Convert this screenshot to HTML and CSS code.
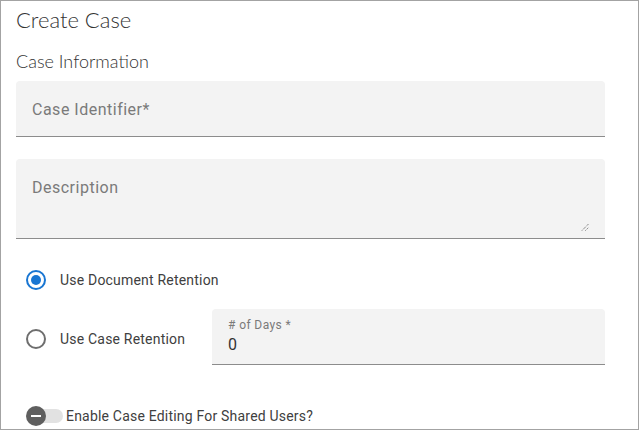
FILE: index.html
```html
<!DOCTYPE html>
<html>
<head>
<meta charset="utf-8">
<link rel="stylesheet" href="styles.css">
</head>
<body>
<div class="frame">
  <h1 class="title">Create Case</h1>
  <h2 class="section">Case Information</h2>
  <div class="field field-id">
    <span class="placeholder">Case Identifier*</span>
  </div>
  <div class="field field-desc">
    <span class="placeholder">Description</span>
    <svg class="grip" width="8" height="8" viewBox="0 0 8 8"><path d="M1 7.5 L7.5 1 M4.5 7.5 L7.5 4.5" stroke="#555" stroke-width="1" stroke-dasharray="1 1"/></svg>
  </div>
  <div class="radios">
    <div class="radio-row">
      <span class="radio checked"><span class="dot"></span></span>
      <span class="radio-label">Use Document Retention</span>
    </div>
    <div class="radio-row second">
      <div class="radio-left">
        <span class="radio"></span>
        <span class="radio-label">Use Case Retention</span>
      </div>
      <div class="field field-days">
        <span class="small-label"># of Days *</span>
        <span class="value">0</span>
      </div>
    </div>
  </div>
  <div class="toggle-row">
    <span class="toggle"><span class="track"></span><span class="thumb"><span class="minus"></span></span></span>
    <span class="toggle-label">Enable Case Editing For Shared Users?</span>
  </div>
</div>
</body>
</html>
```
FILE: styles.css
```css
html, body {
  margin: 0;
  padding: 0;
  background: #fff;
}
.frame {
  box-sizing: border-box;
  width: 639px;
  height: 430px;
  border: 1px solid #a3a3a3;
  padding: 0 33px 0 15px;
  overflow: hidden;
  font-family: Roboto, "Liberation Sans", sans-serif;
}
.title {
  margin: 6px 0 0 0;
  font-family: Lato, "Open Sans", sans-serif;
  font-weight: 300;
  font-size: 22px;
  line-height: 26px;
  color: #333;
}
.section {
  margin: 16px 0 0 0;
  font-family: Lato, "Open Sans", sans-serif;
  font-weight: 300;
  font-size: 18px;
  line-height: 24px;
  color: #333;
}
.field {
  position: relative;
  box-sizing: border-box;
  background: #f3f3f3;
  border-radius: 4px 4px 0 0;
  border-bottom: 1px solid #8c8c8c;
}
.field-id {
  margin-top: 8px;
  height: 56px;
  padding: 19px 16px 0;
}
.field-desc {
  margin-top: 22px;
  height: 80px;
  padding: 19px 16px 0;
}
.placeholder {
  font-size: 16px;
  letter-spacing: 0.5px;
  color: #7a7a7a;
  line-height: 20px;
}
.grip {
  position: absolute;
  right: 16px;
  bottom: 7px;
}
.radios {
  margin-top: 31px;
  display: flex;
  flex-direction: column;
}
.radio-row {
  display: flex;
  align-items: center;
  height: 20px;
  padding-left: 10px;
}
.radio-row.second {
  margin-top: 19px;
  height: 56px;
  justify-content: space-between;
}
.radio-left {
  display: flex;
  align-items: center;
  padding-top: 4px;
}
.radio {
  box-sizing: border-box;
  width: 20px;
  height: 20px;
  border-radius: 50%;
  border: 2px solid #6e6e6e;
  display: flex;
  align-items: center;
  justify-content: center;
}
.radio.checked {
  border-color: #1976d2;
}
.dot {
  width: 10px;
  height: 10px;
  border-radius: 50%;
  background: #1976d2;
}
.radio-label {
  margin-left: 14px;
  font-size: 14px;
  letter-spacing: 0.2px;
  color: #404040;
}
.field-days {
  width: 393px;
  height: 56px;
  padding: 8px 16px 0;
  display: flex;
  flex-direction: column;
}
.small-label {
  font-size: 12px;
  letter-spacing: 0.4px;
  color: #7a7a7a;
  line-height: 16px;
}
.value {
  font-size: 16px;
  color: #333;
  line-height: 24px;
}
.toggle-row {
  margin-top: 41px;
  display: flex;
  align-items: center;
  padding-left: 10px;
}
.toggle {
  position: relative;
  width: 37px;
  height: 20px;
}
.track {
  position: absolute;
  left: 4px;
  top: 3px;
  width: 33px;
  height: 14px;
  border-radius: 7px;
  background: #e2e2e2;
}
.thumb {
  position: absolute;
  left: 0;
  top: 0;
  width: 20px;
  height: 20px;
  border-radius: 50%;
  background: #5f5f5f;
  display: flex;
  align-items: center;
  justify-content: center;
}
.minus {
  width: 10px;
  height: 2px;
  background: #fff;
}
.toggle-label {
  margin-left: 3px;
  font-size: 14px;
  letter-spacing: 0.2px;
  color: #404040;
}
```
